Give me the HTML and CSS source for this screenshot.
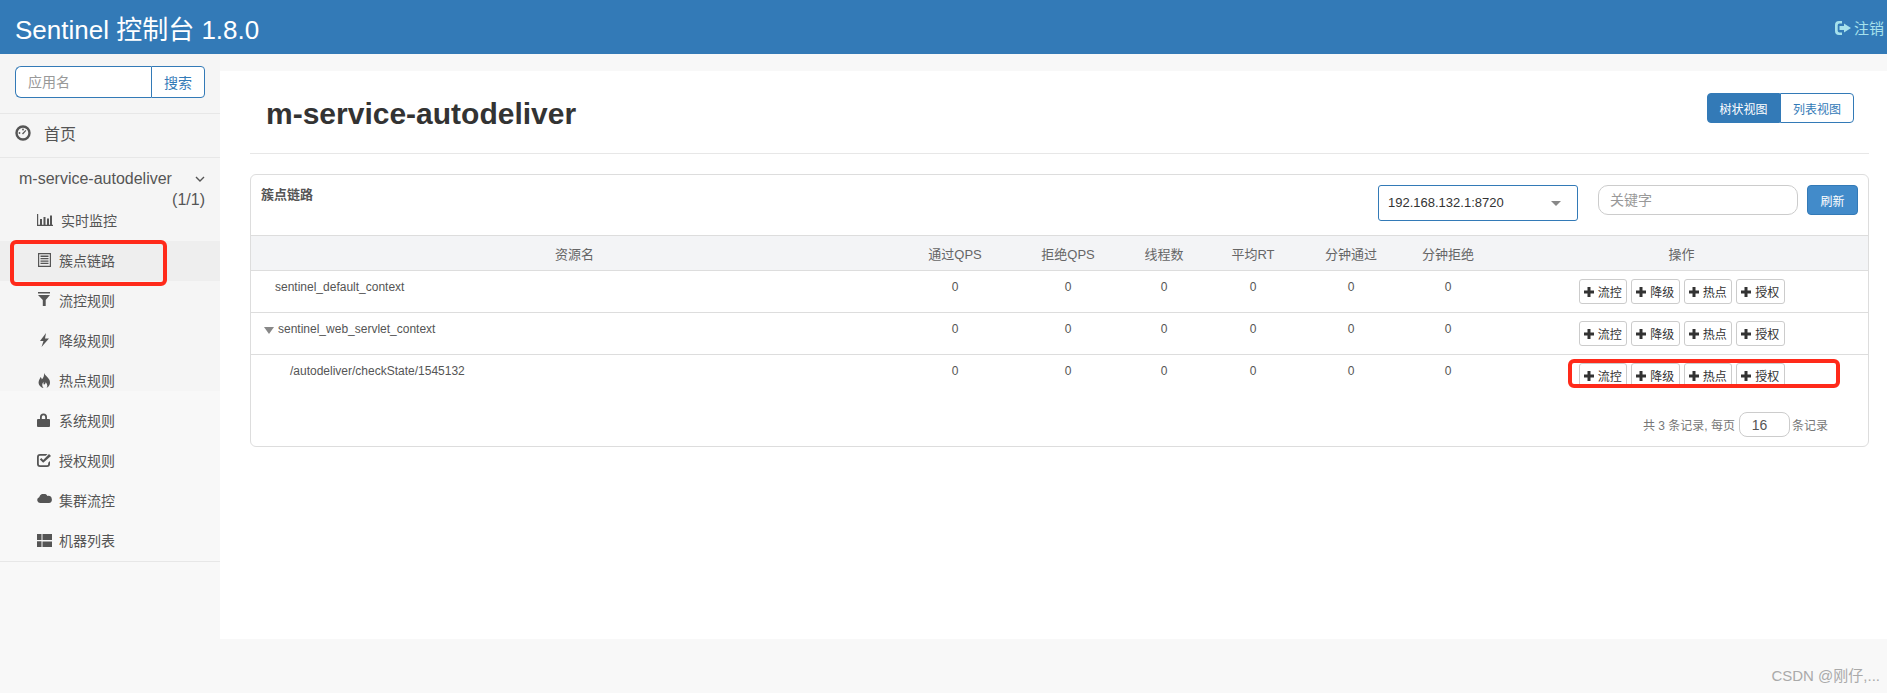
FILE: index.html
```html
<!DOCTYPE html>
<html lang="en">
<head>
  <meta charset="UTF-8" />
  <title>Sentinel 控制台</title>
  <link rel="stylesheet" href="styles.css">
</head>
<body>
  <svg class="defs" width="0" height="0">
    <symbol id="plus" viewBox="1 1 10 10"><path d="M4.5 1h3v3.500H11v3H7.500V11h-3V7.500H1v-3h3.500z"/></symbol>
  </svg>

  <div class="header">
    <span class="brand">Sentinel 控制台 1.8.0</span>
    <a class="logout">
      <svg width="16" height="14" viewBox="0 0 16 14"><path d="M7 0H4a4 4 0 0 0-4 4v6a4 4 0 0 0 4 4h3v-2.500H4.500A1.800 1.800 0 0 1 2.700 9.700V4.300A1.800 1.800 0 0 1 4.500 2.500H7z"/><path d="M9 2.500 16 7l-7 4.500V9H4.500V5H9z"/></svg>
      注销
    </a>
  </div>

  <div class="layout">
    <div class="sidebar">
      <div class="search">
        <input class="search-input" placeholder="应用名">
        <button class="search-btn">搜索</button>
      </div>
      <div class="home">
        <svg width="16" height="16" viewBox="0 0 16 16"><circle cx="8" cy="8" r="6.500" fill="none" stroke="#555" stroke-width="2.400"/><path d="M7 8.500 10.500 5l.8.800L8 9.500z"/><circle cx="4.500" cy="8" r=".9"/><circle cx="8" cy="4.500" r=".9"/></svg>
        首页
      </div>
      <div class="app">
        <div class="app-name">
          <span>m-service-autodeliver</span>
          <svg width="10" height="7" viewBox="0 0 10 7"><path d="M1 1l4 4 4-4" fill="none" stroke="#555" stroke-width="1.400"/></svg>
        </div>
        <div class="app-count">(1/1)</div>
        <ul class="menu">
          <li>
            <svg class="wide" height="12" viewBox="0 0 16 12" preserveAspectRatio="xMinYMid"><path d="M0 0h1.200v10.800H16V12H0zM3 5h2v5.800H3zM6.500 3h2v7.800h-2zM10 4.500h2v6.300h-2zM13 1.500h2v9.300h-2z"/></svg>
            实时监控
          </li>
          <li class="active">
            <svg height="14" viewBox="-1 0 14 14" preserveAspectRatio="xMinYMid"><path fill-rule="evenodd" d="M0 0h13v14H0zM1.200 1.200v11.600h10.600V1.200z"/><path d="M2.500 2.500h8v1.500h-8zM2.500 5h8v1.300h-8zM2.500 7.400h8v1.300h-8zM2.500 9.800h8v1.300h-8z"/></svg>
            簇点链路
          </li>
          <li>
            <svg height="16" viewBox="-1 0 13 16" preserveAspectRatio="xMinYMid"><path d="M0 0h12v1.500H0zM0 3h12L7.700 8v6H4.800V8z"/></svg>
            流控规则
          </li>
          <li>
            <svg height="14" viewBox="-1 0 13 14" preserveAspectRatio="xMinYMid"><path d="M8 0 2 8h3.500L3.500 14 11 5.500H7z"/></svg>
            降级规则
          </li>
          <li>
            <svg height="15" viewBox="-1 0 13 15" preserveAspectRatio="xMinYMid"><path d="M6 0c1 2.500 4 4 5.500 7 1.200 3 .3 6.500-3 8 1.300-1.800 1-3.800-.8-5.800-.3 1.500-1 2-1.700 2.500-.5-1-.7-1.500-.4-3-1.800 1.800-1.800 4.500-.1 6.300C2.500 14.300.3 12 .6 9 1 6.500 2 6 2.500 4 3.500 5 3.700 5.500 3.800 6.500 5.300 5 6.500 3 6 0z"/></svg>
            热点规则
          </li>
          <li>
            <svg height="14" viewBox="0 0 13 14" preserveAspectRatio="xMinYMid"><path fill-rule="evenodd" d="M3 6V4a3.500 3.500 0 0 1 7 0v2h2a1 1 0 0 1 1 1v6a1 1 0 0 1-1 1H1a1 1 0 0 1-1-1V7a1 1 0 0 1 1-1zm1.800 0h3.400V4a1.700 1.700 0 0 0-3.400 0z"/></svg>
            系统规则
          </li>
          <li>
            <svg height="14" viewBox="0 0 14 14" preserveAspectRatio="xMinYMid"><path d="M10.500 1H3a3 3 0 0 0-3 3v7a3 3 0 0 0 3 3h7a3 3 0 0 0 3-3V8l-1.800 1.800V11a1.200 1.200 0 0 1-1.200 1.200H3A1.200 1.200 0 0 1 1.800 11V4A1.200 1.200 0 0 1 3 2.800h5.700z"/><path d="M6.200 9.800 2.800 6.500l1.500-1.500 1.900 1.900L12 1l2 2z"/></svg>
            授权规则
          </li>
          <li>
            <svg height="13" viewBox="0 0 15 13" preserveAspectRatio="xMinYMid"><path d="M3 9a3 3 0 0 1-.8-5.800A4.500 4.500 0 0 1 10.500 2 3.500 3.500 0 0 1 12 9z"/></svg>
            集群流控
          </li>
          <li>
            <svg height="13" viewBox="0 0 15 13" preserveAspectRatio="xMinYMid"><path d="M0 0h4.500v6H0zM0 7.200h4.500V13H0zM5.500 0H15v6H5.500zM5.500 7.500H15V13H5.500z"/></svg>
            机器列表
          </li>
        </ul>
      </div>
    </div>

    <div class="main">
      <div class="page-head">
        <h1>m-service-autodeliver</h1>
        <div class="view-switch">
          <button class="view-btn on">树状视图</button>
          <button class="view-btn">列表视图</button>
        </div>
      </div>

      <div class="box">
        <div class="box-head">
          <span class="box-title">簇点链路</span>
          <div class="machine-select">192.168.132.1:8720<i class="caret"></i></div>
          <input class="keyword" placeholder="关键字">
          <button class="refresh">刷新</button>
        </div>
        <table class="tree">
          <colgroup>
            <col class="c-name"><col class="c-a"><col class="c-b"><col class="c-c"><col class="c-d"><col class="c-e"><col class="c-f"><col>
          </colgroup>
          <thead>
            <tr>
              <th class="th-name">资源名</th><th>通过QPS</th><th>拒绝QPS</th><th>线程数</th><th>平均RT</th><th>分钟通过</th><th>分钟拒绝</th><th class="ops">操作</th>
            </tr>
          </thead>
          <tbody>
            <tr>
              <td class="name lvl0">sentinel_default_context</td>
              <td>0</td><td>0</td><td>0</td><td>0</td><td>0</td><td>0</td>
              <td class="ops">
                <div class="acts">
                  <button class="act"><svg width="10" height="10"><use href="#plus"/></svg>流控</button>
                  <button class="act"><svg width="10" height="10"><use href="#plus"/></svg>降级</button>
                  <button class="act"><svg width="10" height="10"><use href="#plus"/></svg>热点</button>
                  <button class="act"><svg width="10" height="10"><use href="#plus"/></svg>授权</button>
                </div>
              </td>
            </tr>
            <tr>
              <td class="name lvl0b"><i class="node-arrow"></i>sentinel_web_servlet_context</td>
              <td>0</td><td>0</td><td>0</td><td>0</td><td>0</td><td>0</td>
              <td class="ops">
                <div class="acts">
                  <button class="act"><svg width="10" height="10"><use href="#plus"/></svg>流控</button>
                  <button class="act"><svg width="10" height="10"><use href="#plus"/></svg>降级</button>
                  <button class="act"><svg width="10" height="10"><use href="#plus"/></svg>热点</button>
                  <button class="act"><svg width="10" height="10"><use href="#plus"/></svg>授权</button>
                </div>
              </td>
            </tr>
            <tr class="last">
              <td class="name lvl1">/autodeliver/checkState/1545132</td>
              <td>0</td><td>0</td><td>0</td><td>0</td><td>0</td><td>0</td>
              <td class="ops">
                <div class="acts">
                  <button class="act"><svg width="10" height="10"><use href="#plus"/></svg>流控</button>
                  <button class="act"><svg width="10" height="10"><use href="#plus"/></svg>降级</button>
                  <button class="act"><svg width="10" height="10"><use href="#plus"/></svg>热点</button>
                  <button class="act"><svg width="10" height="10"><use href="#plus"/></svg>授权</button>
                </div>
              </td>
            </tr>
          </tbody>
        </table>
        <div class="pager">
          共 3 条记录, 每页
          <span class="page-size">16</span>
          条记录
        </div>
      </div>
    </div>
  </div>

  <div class="mark mark-menu"></div>
  <div class="mark mark-row"></div>
  <div class="watermark">CSDN @刚仔,...</div>
</body>
</html>
```

FILE: styles.css
```css
* {
  box-sizing: border-box;
}

body {
  margin: 0;
  height: 693px;
  overflow: hidden;
  position: relative;
  font-family: "Liberation Sans", "Noto Sans CJK SC", sans-serif;
  font-size: 14px;
  color: #555;
  background: #f8f8f8;
}

.defs {
  position: absolute;
}

button,
input {
  font-family: inherit;
}

.header {
  display: flex;
  justify-content: space-between;
  align-items: center;
  height: 54px;
  padding: 0 3px 0 15px;
  background: #337ab7;
}

.brand {
  font-size: 26px;
  color: #fff;
}

.logout {
  display: flex;
  align-items: center;
  gap: 3px;
  margin-top: 1px;
  font-size: 15px;
  color: #a6e1ec;
}

.logout svg {
  fill: #a6e1ec;
}

.layout {
  display: flex;
}

.sidebar {
  width: 220px;
  flex: none;
  height: 639px;
  background: linear-gradient(#f5f5f5 337px, #f8f8f8 337px);
}

.search {
  display: flex;
  margin: 12px 15px 0;
  height: 32px;
}

.search-input {
  width: 136px;
  height: 32px;
  padding: 0 12px;
  border: 1px solid #337ab7;
  border-right: none;
  border-radius: 6px 0 0 6px;
  font-size: 14px;
  outline: none;
}

.search-input::placeholder,
.keyword::placeholder {
  color: #999;
}

.search-btn {
  width: 54px;
  height: 32px;
  border: 1px solid #337ab7;
  border-radius: 0 4px 4px 0;
  background: #fff;
  color: #337ab7;
  font-size: 14px;
  padding: 0;
}

.home {
  display: flex;
  align-items: center;
  gap: 13px;
  height: 45px;
  margin-top: 15px;
  padding: 0 0 6px 15px;
  border-top: 1px solid #e7e7e7;
  border-bottom: 1px solid #e7e7e7;
  font-size: 16px;
}

.home svg,
.menu svg {
  fill: #555;
}

.app {
  border-bottom: 1px solid #e7e7e7;
  padding-top: 11px;
}

.app-name {
  display: flex;
  justify-content: space-between;
  align-items: center;
  height: 20px;
  padding: 0 15px 0 19px;
  font-size: 16px;
}

.app-count {
  height: 12px;
  padding-right: 15px;
  font-size: 16px;
  line-height: 22px;
  text-align: right;
}

.menu {
  list-style: none;
  margin: 0;
  padding: 0;
}

.menu li {
  display: flex;
  align-items: center;
  height: 40px;
  padding: 0 0 2px 37px;
}

.menu li svg {
  flex: none;
  width: 22px;
}

.menu li svg.wide {
  width: 24px;
}

.menu li.active {
  background: #eee;
}

.main {
  flex: 1;
  height: 568px;
  margin-top: 17px;
  padding: 0 18px 0 30px;
  background: #fff;
}

.page-head {
  display: flex;
  justify-content: space-between;
  height: 83px;
  padding: 21px 15px 0 16px;
  border-bottom: 1px solid #e7e7e7;
}

.page-head h1 {
  margin: 0;
  font-size: 30px;
  line-height: 44px;
  color: #333;
}

.view-switch {
  display: flex;
  height: 30px;
  margin-top: 1px;
}

.view-btn {
  width: 74px;
  height: 30px;
  padding: 0;
  border: 1px solid #337ab7;
  border-radius: 0 4px 4px 0;
  background: #fff;
  color: #337ab7;
  font-size: 12px;
}

.view-btn.on {
  width: 73px;
  border-radius: 4px 0 0 4px;
  background: #337ab7;
  color: #fff;
}

.box {
  margin-top: 20px;
  height: 273px;
  border: 1px solid #ddd;
  border-radius: 6px;
}

.box-head {
  display: flex;
  align-items: flex-start;
  height: 60px;
  padding: 10px 10px 0;
}

.box-title {
  flex: 1;
  font-size: 13px;
  font-weight: bold;
  line-height: 19px;
}

.machine-select {
  position: relative;
  width: 200px;
  height: 36px;
  padding-left: 9px;
  border: 1px solid #337ab7;
  border-radius: 3px;
  font-size: 13px;
  line-height: 34px;
  color: #333;
}

.caret {
  position: absolute;
  right: 16px;
  top: 15px;
  border-left: 5px solid transparent;
  border-right: 5px solid transparent;
  border-top: 5px solid #888;
}

.keyword {
  width: 200px;
  height: 30px;
  margin: 0 9px 0 20px;
  padding: 0 11px;
  border: 1px solid #ccc;
  border-radius: 10px;
  font-size: 14px;
  outline: none;
}

.refresh {
  width: 51px;
  height: 30px;
  padding: 0;
  border: 1px solid #337ab7;
  border-radius: 4px;
  background: #428bca;
  color: #fff;
  font-size: 12px;
}

.tree {
  width: 100%;
  table-layout: fixed;
  border-collapse: collapse;
}

.c-name { width: 639px; }
.c-a { width: 130px; }
.c-b { width: 96px; }
.c-c { width: 96px; }
.c-d { width: 82px; }
.c-e { width: 114px; }
.c-f { width: 80px; }

.tree th {
  height: 35px;
  padding: 0;
  background: #f3f4f6;
  border-top: 1px solid #ddd;
  border-bottom: 1px solid #ddd;
  font-size: 13px;
  font-weight: normal;
  color: #666;
}

.tree th.th-name {
  padding-left: 8px;
}

.tree td {
  height: 42px;
  padding: 8px 0 0;
  border-bottom: 1px solid #ddd;
  font-size: 12px;
  line-height: 16px;
  text-align: center;
  vertical-align: top;
}

.tree tr.last td {
  border-bottom: none;
}

.tree td.name {
  text-align: left;
}

.tree td.lvl0 { padding-left: 24px; }
.tree td.lvl0b { padding-left: 13px; }
.tree td.lvl1 { padding-left: 39px; }

.node-arrow {
  display: inline-block;
  margin-right: 4px;
  border-left: 5px solid transparent;
  border-right: 5px solid transparent;
  border-top: 7px solid #888;
  vertical-align: -1px;
}

.tree .ops {
  padding-left: 7px;
}

.acts {
  display: flex;
  justify-content: center;
  gap: 4px;
}

.act {
  display: inline-flex;
  justify-content: center;
  align-items: center;
  gap: 4px;
  width: 48.5px;
  height: 25px;
  padding: 0;
  border: 1px solid #ccc;
  border-radius: 3px;
  background: #fff;
  color: #333;
  font-size: 12px;
}

.act svg {
  fill: #333;
}

.pager {
  display: flex;
  justify-content: flex-end;
  align-items: center;
  gap: 4px;
  margin-top: 15px;
  padding-right: 40px;
  font-size: 12px;
  color: #777;
}

.page-size {
  width: 51px;
  height: 25px;
  margin-right: -2px;
  padding-right: 10px;
  border: 1px solid #ccc;
  border-radius: 8px;
  font-size: 14px;
  line-height: 25px;
  text-align: center;
  color: #555;
}

.mark {
  position: absolute;
  border: 4px solid #ff2a1a;
  border-radius: 6px;
}

.mark-menu {
  left: 10px;
  top: 240px;
  width: 157px;
  height: 46px;
}

.mark-row {
  left: 1568px;
  top: 359px;
  width: 272px;
  height: 29px;
}

.watermark {
  position: absolute;
  right: 7px;
  bottom: 8px;
  font-size: 15px;
  color: #aaa;
}
```
